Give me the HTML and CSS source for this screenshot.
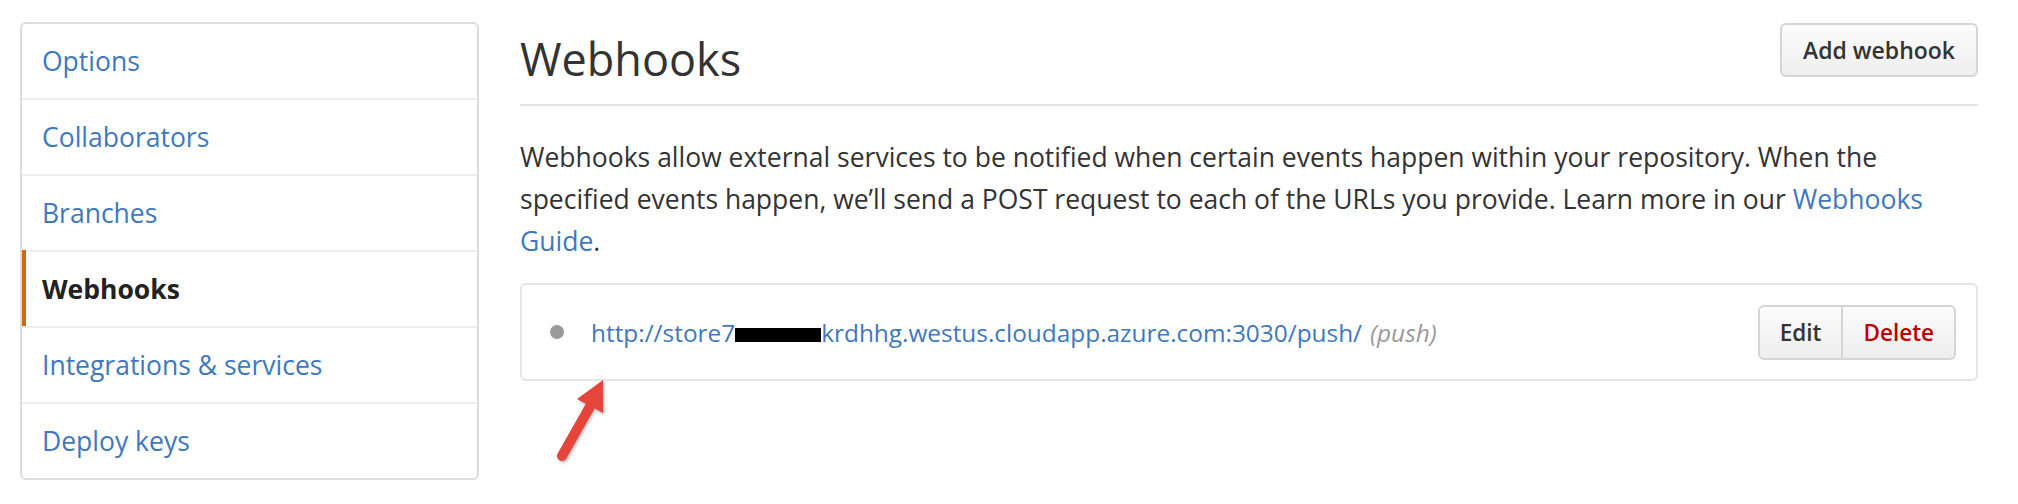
FILE: index.html
```html
<!DOCTYPE html>
<html lang="en">
<head>
<meta charset="utf-8">
<title>Webhooks</title>
<link rel="stylesheet" href="styles.css">
</head>
<body>
<div class="page">
  <nav class="menu">
    <a class="menu-item" href="#">Options</a>
    <a class="menu-item" href="#">Collaborators</a>
    <a class="menu-item" href="#">Branches</a>
    <a class="menu-item selected" href="#">Webhooks</a>
    <a class="menu-item" href="#">Integrations &amp; services</a>
    <a class="menu-item" href="#">Deploy keys</a>
  </nav>
  <main class="main">
    <div class="subhead">
      <h2 class="subhead-title">Webhooks</h2>
      <button class="btn btn-add">Add webhook</button>
    </div>
    <p class="desc">Webhooks allow external services to be notified when certain events happen within your repository. When the specified events happen, we’ll send a POST request to each of the URLs you provide. Learn more in our <a href="#">Webhooks Guide</a>.</p>
    <div class="hook">
      <span class="dot"></span>
      <a class="hook-url" href="#">http://store7<span class="redact"></span>krdhhg.westus.cloudapp.azure.com:3030/push/</a>
      <em class="hook-events">(push)</em>
      <div class="btn-group">
        <button class="btn btn-group-item">Edit</button>
        <button class="btn btn-group-item btn-danger">Delete</button>
      </div>
    </div>
  </main>
  <svg class="arrow" width="80" height="100" viewBox="0 0 80 100">
    <line x1="52" y1="33" x2="22" y2="86" stroke="#e5453b" stroke-width="10" stroke-linecap="round"/>
    <polygon points="63,10 37,29 63,43" fill="#e5453b"/>
  </svg>
</div>
</body>
</html>
```

FILE: styles.css
```css
* {
  box-sizing: border-box;
}

html, body {
  margin: 0;
  padding: 0;
  background: #fff;
}

body {
  font-family: "Open Sans", "Noto Sans", sans-serif;
  color: #333;
}

a {
  color: #4078c0;
  text-decoration: none;
}

.page {
  position: relative;
  display: flex;
  gap: 41px;
  padding: 22px 40px 0 20px;
  height: 504px;
}

.menu {
  width: 459px;
  flex: none;
  align-self: flex-start;
  border: 2px solid #dcdcdc;
  border-radius: 6px;
  overflow: hidden;
}

.menu-item {
  position: relative;
  display: block;
  height: 76px;
  line-height: 74px;
  padding-left: 20px;
  font-size: 26.5px;
  border-bottom: 2px solid #eee;
}

.menu-item:last-child {
  height: 74px;
  border-bottom: 0;
}

.menu-item.selected {
  color: #222;
  font-weight: 700;
}

.menu-item.selected::before {
  content: "";
  position: absolute;
  left: 0;
  top: -2px;
  bottom: 0;
  width: 4px;
  background: #d26911;
}

.main {
  flex: 1;
  min-width: 0;
}

.subhead {
  display: flex;
  justify-content: space-between;
  align-items: flex-start;
  padding-bottom: 8px;
  border-bottom: 2px solid #e5e5e5;
}

.subhead-title {
  margin: 0;
  font-size: 45px;
  font-weight: 400;
  line-height: 74px;
  color: #333;
}

.btn {
  font-family: inherit;
  font-size: 22.5px;
  font-weight: 600;
  color: #333;
  height: 54px;
  padding: 0 20px;
  border: 2px solid #d5d5d5;
  border-radius: 6px;
  background: linear-gradient(#fcfcfc, #eeeeee);
  cursor: pointer;
}

.btn-add {
  margin-top: 1px;
  font-size: 23px;
  padding: 0 21px;
}

.desc {
  margin: 30px 0 21px;
  font-size: 26.5px;
  line-height: 42px;
  color: #333;
}

.hook {
  display: flex;
  align-items: center;
  height: 98px;
  padding: 0 20px 0 28px;
  border: 2px solid #e5e5e5;
  border-radius: 6px;
  font-size: 24.4px;
}

.dot {
  flex: none;
  width: 14px;
  height: 14px;
  border-radius: 50%;
  background: #9a9a9a;
  margin-right: 27px;
}

.hook-url {
  white-space: nowrap;
}

.redact {
  display: inline-block;
  width: 86px;
  height: 14px;
  background: #000;
  vertical-align: baseline;
}

.hook-events {
  margin-left: 8px;
  color: #999;
}

.btn-group {
  display: flex;
  margin-left: auto;
}

.btn-group-item {
  height: 55px;
  border-radius: 0;
}

.btn-group-item:first-child {
  border-radius: 6px 0 0 6px;
}

.btn-group-item:last-child {
  border-radius: 0 6px 6px 0;
  border-left: 0;
}

.btn-danger {
  color: #b00;
}

.arrow {
  position: absolute;
  left: 540px;
  top: 370px;
  filter: drop-shadow(1px 2px 1.5px rgba(0, 0, 0, 0.25));
}
```
